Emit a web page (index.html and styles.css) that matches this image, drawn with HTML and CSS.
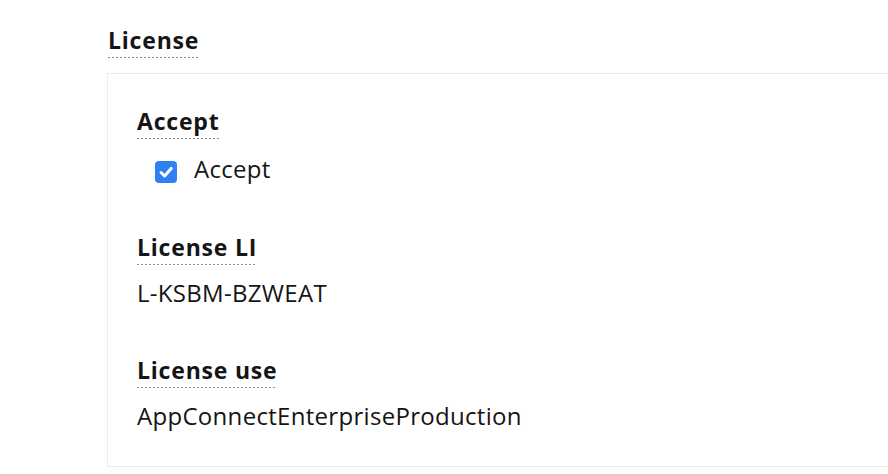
FILE: index.html
```html
<!DOCTYPE html>
<html lang="en">
<head>
<meta charset="utf-8">
<title>License</title>
<link rel="stylesheet" href="styles.css">
</head>
<body>
<div class="page">
  <div class="section-title"><span class="term">License</span></div>
  <div class="box">
    <div class="group">
      <div class="group-label"><span class="term">Accept</span></div>
      <label class="check">
        <span class="checkbox">
          <svg viewBox="0 0 22 22" width="22" height="22" aria-hidden="true"><path d="M6 11.5 L9.6 15 L16.2 7.4" fill="none" stroke="#fff" stroke-width="3" stroke-linecap="round" stroke-linejoin="round"/></svg>
        </span>
        <span class="check-text">Accept</span>
      </label>
    </div>
    <div class="group group-li">
      <div class="group-label"><span class="term">License LI</span></div>
      <div class="value">L-KSBM-BZWEAT</div>
    </div>
    <div class="group group-use">
      <div class="group-label"><span class="term">License use</span></div>
      <div class="value">AppConnectEnterpriseProduction</div>
    </div>
  </div>
</div>
</body>
</html>
```

FILE: styles.css
```css
html, body {
  margin: 0;
  padding: 0;
  background: #ffffff;
  overflow: hidden;
}

body {
  font-family: "Open Sans", "Noto Sans", sans-serif;
  color: #151515;
}

.page {
  padding: 28px 0 0 107px;
  width: 1000px;
}

.section-title {
  padding-left: 1px;
  height: 31px;
}

.term {
  display: inline-block;
  font-size: 23px;
  font-weight: 700;
  letter-spacing: 0.8px;
  line-height: 24px;
  padding-bottom: 6px;
  background-image: linear-gradient(to right, #8a8d90 50%, rgba(255,255,255,0) 0%);
  background-size: 4px 1px;
  background-repeat: repeat-x;
  background-position: left bottom;
}

.box {
  margin-top: 14px;
  border: 1px solid #ececec;
  border-right: none;
  padding: 35px 0 38px 29px;
}

.group-label {
  height: 31px;
}

.check {
  display: flex;
  align-items: center;
  margin-top: 20px;
  margin-left: 18px;
  height: 24px;
}

.checkbox {
  width: 22px;
  height: 22px;
  border-radius: 4px;
  background: #2f7ff5;
  display: flex;
}

.check-text {
  margin-left: 17px;
  margin-bottom: 6px;
  font-size: 24px;
  letter-spacing: 0.3px;
  line-height: 24px;
}

.group-li {
  margin-top: 51px;
}

.group-use {
  margin-top: 53px;
}

.value {
  margin-top: 15px;
  font-size: 24px;
  letter-spacing: 0.3px;
  line-height: 24px;
}
```
